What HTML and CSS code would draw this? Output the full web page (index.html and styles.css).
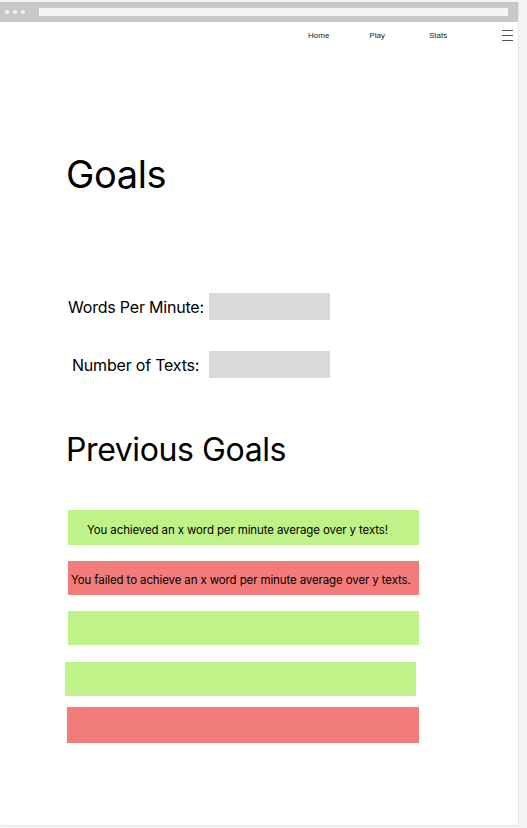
FILE: index.html
```html
<!DOCTYPE html>
<html>
<head>
<meta charset="utf-8">
<link rel="stylesheet" href="styles.css">
</head>
<body>
<div class="window">
  <div class="chrome">
    <div class="dots"><span></span><span></span><span></span></div>
    <div class="address"></div>
  </div>
  <nav class="nav">
    <a class="nav-home">Home</a>
    <a class="nav-play">Play</a>
    <a class="nav-stats">Stats</a>
    <div class="burger"><span></span><span></span><span></span></div>
  </nav>
  <main class="content">
    <h1 class="title">Goals</h1>
    <div class="form">
      <div class="row row-wpm"><label>Words Per Minute:</label><div class="field"></div></div>
      <div class="row row-texts"><label>Number of Texts:</label><div class="field"></div></div>
    </div>
    <h2 class="subtitle">Previous Goals</h2>
    <div class="goals">
      <div class="goal good g1">You achieved an x word per minute average over y texts!</div>
      <div class="goal bad g2">You failed to achieve an x word per minute average over y texts.</div>
      <div class="goal good g3"></div>
      <div class="goal good g4"></div>
      <div class="goal bad g5"></div>
    </div>
  </main>
</div>
</body>
</html>
```

FILE: styles.css
```css
html, body {
  margin: 0;
  padding: 0;
  background: #f3f3f3;
}
body {
  font-family: Inter, "Noto Sans", sans-serif;
  color: #000;
}
.window {
  width: 518px;
  height: 823px;
  margin-top: 2px;
  background: #fff;
  border-right: 1px solid #e6e6e6;
  border-bottom: 1px solid #e8e8e8;
  border-radius: 0 0 3px 3px;
  overflow: hidden;
}
.chrome {
  height: 20px;
  background: #c8c8c8;
  display: flex;
  align-items: center;
  padding-left: 5px;
  padding-right: 10px;
}
.dots {
  display: flex;
  gap: 4px;
  width: 34px;
}
.dots span {
  width: 4px;
  height: 4px;
  border-radius: 50%;
  background: #f2f2f2;
}
.address {
  flex: 1;
  height: 8px;
  background: #f5f5f5;
}
.nav {
  height: 26px;
  display: flex;
  align-items: center;
  font-family: "Liberation Sans", Arial, sans-serif;
  font-size: 8px;
  color: #222;
}
.nav a { display: block; }
.nav-home { margin-left: 308px; }
.nav-play { margin-left: 40px; }
.nav-stats { margin-left: 44px; }
.burger {
  margin-left: 55px;
  display: flex;
  flex-direction: column;
  gap: 4px;
}
.burger span {
  width: 11px;
  height: 1px;
  background: #555;
}
.content {
  padding-left: 66px;
}
.title {
  margin: 0;
  padding-top: 103px;
  font-size: 38px;
  font-weight: 400;
  line-height: 46px;
  letter-spacing: -0.4px;
}
.form {
  margin-top: 96px;
}
.row {
  display: flex;
  align-items: center;
  height: 27px;
  font-size: 16px;
  letter-spacing: -0.2px;
}
.row label { display: block; }
.row-wpm label { margin-left: 2px; width: 141px; }
.row-texts { margin-top: 31px; }
.row-texts label { margin-left: 6px; width: 137px; }
.field {
  width: 121px;
  height: 27px;
  background: #d9d9d9;
}
.subtitle {
  margin: 0;
  margin-top: 52px;
  font-size: 32px;
  font-weight: 400;
  line-height: 40px;
  letter-spacing: -0.4px;
}
.goals {
  margin-top: 40px;
  display: flex;
  flex-direction: column;
}
.goal {
  width: 351px;
  height: 35px;
  display: flex;
  align-items: center;
  font-size: 11.5px;
  letter-spacing: -0.12px;
  white-space: nowrap;
  box-sizing: border-box;
}
.good { background: #c0f28a; }
.bad { background: #f27c7a; }
.g1 { margin-left: 2px; padding-left: 19px; padding-top: 4px; }
.g2 { margin-left: 2px; margin-top: 16px; padding-left: 3px; padding-top: 3px; height: 34px; }
.g3 { margin-left: 2px; margin-top: 16px; height: 34px; }
.g4 { margin-left: -1px; margin-top: 17px; height: 34px; }
.g5 { margin-left: 1px; margin-top: 11px; height: 36px; width: 352px; }
```
